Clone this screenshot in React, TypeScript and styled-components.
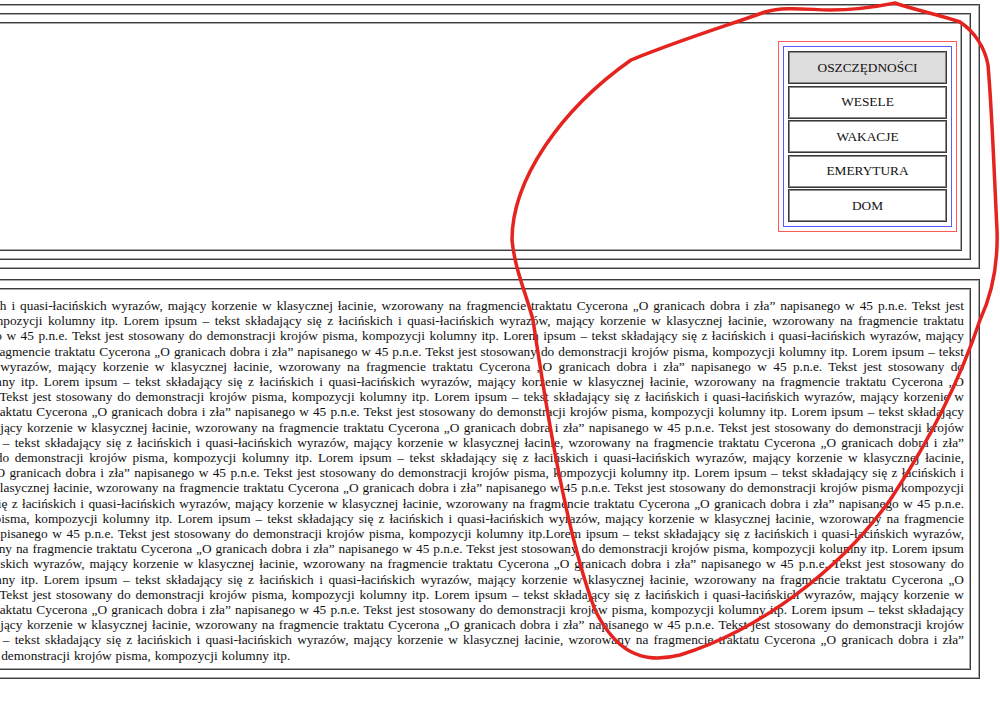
import React from "react";
import styled, { createGlobalStyle } from "styled-components";

const GlobalStyle = createGlobalStyle`
  html, body {
    margin: 0;
    padding: 0;
    background: #ffffff;
    overflow: hidden;
  }
  body {
    font-family: "Liberation Serif", "Times New Roman", serif;
    color: #000000;
  }
`;

const Page = styled.div`
  position: relative;
  width: 1256px;
  margin-left: -276px;
  padding-top: 4px;
  display: flex;
  flex-direction: column;
  gap: 10px;
`;

const Frame = styled.div`
  border: 1px solid #3c3c3c;
  box-shadow: inset 0 0 0 1px #a8a8a8;
  padding: 8px;
`;

const Stage = styled.div`
  border: 1px solid #3c3c3c;
  box-shadow: inset 0 0 0 1px #a8a8a8;
  padding: 18px 4px;
  display: flex;
  justify-content: flex-end;
`;

const MenuOuter = styled.div`
  border: 1px solid #ff5a5a;
  padding: 4px;
`;

const MenuInner = styled.nav`
  border: 1px solid #5a5aff;
  padding: 4px;
  display: flex;
  flex-direction: column;
  gap: 1.5px;
`;

const MenuButton = styled.button<{ $active?: boolean }>`
  width: 159px;
  height: 33px;
  margin: 0;
  padding: 0;
  border: 1px solid #3a3a3a;
  box-shadow: inset 0 0 0 1px #8a8a8a;
  background: ${(p) => (p.$active ? "#dddddd" : "#ffffff")};
  font-family: "Liberation Serif", "Times New Roman", serif;
  font-size: 13.33px;
  color: #111111;
  text-transform: uppercase;
  text-align: center;
  cursor: pointer;
`;

const TextFrame = styled.div`
  border: 1px solid #3c3c3c;
  box-shadow: inset 0 0 0 1px #a8a8a8;
  padding: 9px 6px 6px 7px;
`;

const Paragraph = styled.p`
  margin: 0;
  font-size: 13.33px;
  line-height: 15.2px;
  word-spacing: 0.6px;
  text-align: justify;
  color: #111111;
`;

const Annotation = styled.svg`
  position: fixed;
  top: 0;
  left: 0;
  width: 1000px;
  height: 711px;
  pointer-events: none;
`;

const UNIT =
  "Lorem ipsum – tekst składający się z łacińskich i quasi-łacińskich wyrazów, mający korzenie w klasycznej łacinie, wzorowany na fragmencie traktatu Cycerona „O granicach dobra i zła\u201D napisanego w 45 p.n.e. Tekst jest stosowany do demonstracji krojów pisma, kompozycji kolumny itp.";

const buildText = () => {
  let s = "";
  for (let i = 0; i < 18; i++) {
    if (i > 0) s += i === 12 ? "" : " ";
    s += UNIT;
  }
  return s;
};

const items = ["Oszczędności", "Wesele", "Wakacje", "Emerytura", "Dom"];

export default function App() {
  return (
    <>
      <GlobalStyle />
      <Page>
        <Frame>
          <Frame>
            <Stage>
              <MenuOuter>
                <MenuInner>
                  {items.map((t, i) => (
                    <MenuButton key={t} $active={i === 0}>
                      {t}
                    </MenuButton>
                  ))}
                </MenuInner>
              </MenuOuter>
            </Stage>
          </Frame>
        </Frame>
        <Frame>
          <TextFrame>
            <Paragraph>{buildText()}</Paragraph>
          </TextFrame>
        </Frame>
      </Page>
      <Annotation viewBox="0 0 1000 711">
        <path
          d="M 631 60 C 680 40, 720 28, 765 12 C 785 6, 810 10, 830 10 C 855 10, 880 6, 895 3 C 915 10, 940 15, 960 22 C 975 32, 985 48, 988 65 C 992 110, 994 170, 997 230 C 998 260, 994 290, 980 320 C 960 380, 930 440, 890 500 C 840 570, 760 630, 680 655 C 640 665, 615 650, 595 610 C 565 530, 545 400, 533 320 C 525 290, 515 270, 512 240 C 512 180, 560 110, 631 60"
          fill="none"
          stroke="#e52420"
          strokeWidth={3.5}
          strokeLinecap="round"
          strokeLinejoin="round"
        />
      </Annotation>
    </>
  );
}
